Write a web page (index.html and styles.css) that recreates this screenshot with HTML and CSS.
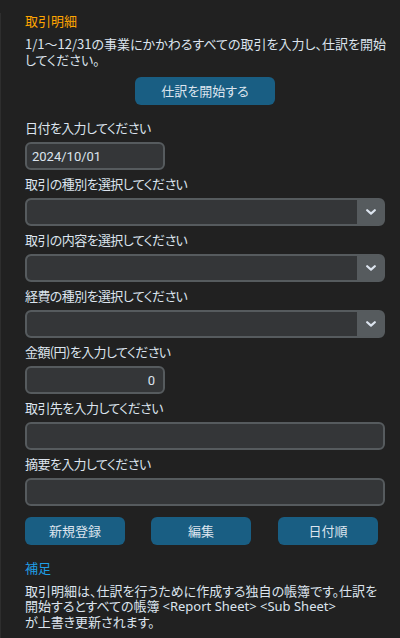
FILE: index.html
```html
<!DOCTYPE html>
<html lang="ja">
<head>
<meta charset="utf-8">
<title>取引明細</title>
<link rel="stylesheet" href="styles.css">
</head>
<body>
<div class="frame">
  <div class="title">取引明細</div>
  <div class="desc"><div>1/1〜12/31の事業にかかわるすべての取引を入力し、仕訳を開始</div><div>してください。</div></div>
  <div class="start-row"><button class="btn btn-start">仕訳を開始する</button></div>

  <div class="form">
    <div class="field">
      <div class="label">日付を入力してください</div>
      <div class="entry entry-short"><span class="entry-text">2024/10/01</span></div>
    </div>
    <div class="field">
      <div class="label">取引の種別を選択してください</div>
      <div class="combo"><div class="combo-value"></div><div class="combo-btn"><svg width="10" height="6" viewBox="0 0 10 6"><path d="M1.2 1.2 L5 4.6 L8.8 1.2" fill="none" stroke="#dce4ee" stroke-width="2.2" stroke-linecap="round" stroke-linejoin="round"/></svg></div></div>
    </div>
    <div class="field">
      <div class="label">取引の内容を選択してください</div>
      <div class="combo"><div class="combo-value"></div><div class="combo-btn"><svg width="10" height="6" viewBox="0 0 10 6"><path d="M1.2 1.2 L5 4.6 L8.8 1.2" fill="none" stroke="#dce4ee" stroke-width="2.2" stroke-linecap="round" stroke-linejoin="round"/></svg></div></div>
    </div>
    <div class="field">
      <div class="label">経費の種別を選択してください</div>
      <div class="combo"><div class="combo-value"></div><div class="combo-btn"><svg width="10" height="6" viewBox="0 0 10 6"><path d="M1.2 1.2 L5 4.6 L8.8 1.2" fill="none" stroke="#dce4ee" stroke-width="2.2" stroke-linecap="round" stroke-linejoin="round"/></svg></div></div>
    </div>
    <div class="field">
      <div class="label">金額(円)を入力してください</div>
      <div class="entry entry-short entry-right"><span class="entry-text">0</span></div>
    </div>
    <div class="field">
      <div class="label">取引先を入力してください</div>
      <div class="entry"></div>
    </div>
    <div class="field">
      <div class="label">摘要を入力してください</div>
      <div class="entry"></div>
    </div>
  </div>

  <div class="actions">
    <button class="btn btn-action">新規登録</button>
    <button class="btn btn-action">編集</button>
    <button class="btn btn-action">日付順</button>
  </div>

  <div class="note-title">補足</div>
  <div class="note"><div>取引明細は、仕訳を行うために作成する独自の帳簿です。仕訳を</div><div>開始するとすべての帳簿 <span class="latin">&lt;Report Sheet&gt; &lt;Sub Sheet&gt;</span></div><div>が上書き更新されます。</div></div>
</div>
</body>
</html>
```

FILE: styles.css
```css
* { box-sizing: border-box; }

html, body {
  margin: 0;
  padding: 0;
  background: #212121;
}

body {
  width: 400px;
  height: 638px;
  overflow: hidden;
  font-family: "Noto Sans CJK JP", "Noto Sans", sans-serif;
  font-feature-settings: "palt";
  font-size: 13px;
  color: #dce4ee;
}

.frame {
  margin-top: 13px;
  height: 625px;
  border-left: 1px solid #2e2e2e;
  padding: 0 15px 0 24px;
}

.title {
  color: #ffa500;
  line-height: 16px;
}

.desc {
  margin-top: 7px;
  line-height: 16px;
  white-space: nowrap;
}

.start-row {
  margin-top: 9px;
  display: flex;
  justify-content: center;
}

.btn {
  font-family: inherit;
  font-feature-settings: "palt";
  font-size: 13px;
  color: #dce4ee;
  background: #195e83;
  border: none;
  border-radius: 6px;
  height: 28px;
  padding: 0;
  line-height: 28px;
}

.btn-start { width: 140px; }

.form {
  margin-top: 13px;
  display: flex;
  flex-direction: column;
}

.field {
  display: flex;
  flex-direction: column;
  padding-bottom: 4px;
}

.label {
  line-height: 20px;
  height: 20px;
  white-space: nowrap;
  letter-spacing: -0.6px;
}

.entry {
  margin-top: 4px;
  height: 28px;
  width: 360px;
  background: #343638;
  border: 2px solid #565b5e;
  border-radius: 6px;
  display: flex;
  align-items: center;
  padding: 0 8px 0 5px;
}

.entry-short { width: 140px; }
.entry-right { justify-content: flex-end; }

.entry-text {
  font-family: Roboto, "Liberation Sans", sans-serif;
  font-size: 13px;
  color: #dce4ee;
}

.combo {
  margin-top: 4px;
  height: 28px;
  width: 360px;
  border: 2px solid #565b5e;
  border-radius: 6px;
  background: #565b5e;
  display: flex;
  overflow: hidden;
}

.combo-value {
  flex: 1;
  background: #343638;
  border-radius: 4px 0 0 4px;
}

.combo-btn {
  width: 26px;
  display: flex;
  align-items: center;
  justify-content: center;
  padding-left: 2px;
}

.actions {
  margin-top: 7px;
  display: flex;
  gap: 26px;
}

.btn-action { width: 100px; }

.actions .btn-action:last-child { margin-left: 1px; }

.note-title {
  margin-top: 13px;
  color: #1f9fe6;
  line-height: 20px;
}

.note {
  margin-top: 5px;
  line-height: 15px;
  white-space: nowrap;
}

.latin {
  font-family: "Noto Sans", "Noto Sans CJK JP", sans-serif;
}
```
